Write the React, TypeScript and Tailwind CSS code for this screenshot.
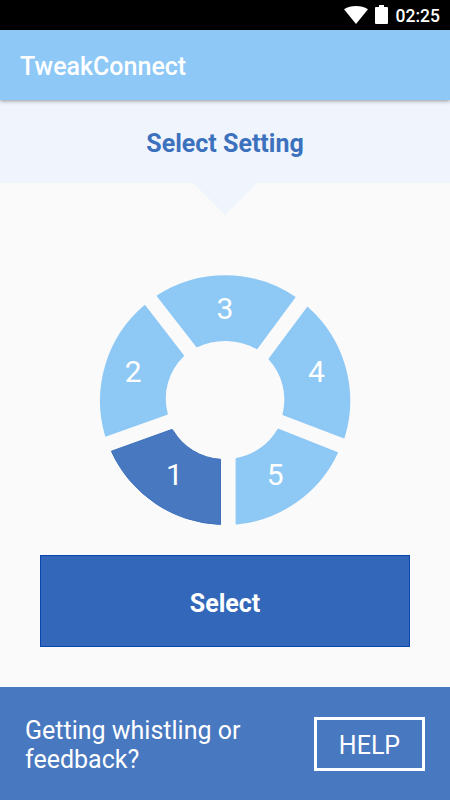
const segments = [
  {
    label: "1",
    x: 174.5,
    y: 485.2,
    selected: true,
    d: "M111.4 451.2 L171.5 429.6 Q172.3 429.3 172.9 430.2 A59.5 59.5 0 0 0 220.5 459.3 V524.5 A124.7 124.7 0 0 1 111.4 451.2 Z",
  },
  {
    label: "2",
    x: 133.3,
    y: 381.6,
    selected: false,
    d: "M144.8 306 L183.2 355.7 A59.5 59.5 0 0 0 166.9 414 L105.9 435.6 A124.3 124.3 0 0 1 144.8 306 Z",
  },
  {
    label: "3",
    x: 225,
    y: 319,
    selected: false,
    d: "M157.7 296 A124.3 124.3 0 0 1 294.5 297.3 L256.8 348.3 A66 66 0 0 0 197 346.4 Z",
  },
  {
    label: "4",
    x: 316.5,
    y: 381.6,
    selected: false,
    d: "M307.6 307.8 A124.3 124.3 0 0 1 343.8 437.4 L283.4 414.4 A60 60 0 0 0 269.4 359 Z",
  },
  {
    label: "5",
    x: 275.3,
    y: 485.2,
    selected: false,
    d: "M278.3 429.5 L337 452.8 A124.3 124.3 0 0 1 236.5 523.7 V458.8 A59.5 59.5 0 0 0 278.3 429.5 Z",
  },
];

function StatusBar() {
  return (
    <div className="flex h-[30px] items-center justify-end bg-black pr-[10px] text-white">
      <svg className="mr-px h-[18px] w-6" viewBox="0 0 24 18" fill="currentColor">
        <path d="M0 3.3 C7 -1.1 17 -1.1 24 3.3 L12 18 Z" />
      </svg>
      <svg className="mb-px ml-[6px] h-[19px] w-[13px]" viewBox="0 0 13 19" fill="currentColor">
        <path d="M4 0 H9 V2 H12 Q13 2 13 3 V18 Q13 19 12 19 H1 Q0 19 0 18 V3 Q0 2 1 2 H4 Z" />
      </svg>
      <span className="ml-2 pt-[3px] text-[17.5px] leading-none font-medium">02:25</span>
    </div>
  );
}

function SettingWheel() {
  return (
    <svg className="h-[252px] w-[252px]" viewBox="99 274 252 252">
      {segments.map((segment) => (
        <g key={segment.label}>
          <path
            d={segment.d}
            className={segment.selected ? "fill-[#4878c0] stroke-[#3d71bd]" : "fill-[#8ec8f5] stroke-[#8ec8f5]"}
            strokeWidth={segment.selected ? 1 : 1.8}
            strokeLinejoin="round"
          />
          <text x={segment.x} y={segment.y} textAnchor="middle" className="fill-white text-[30px]">
            {segment.label}
          </text>
        </g>
      ))}
    </svg>
  );
}

export default function App() {
  return (
    <div className="flex h-[800px] w-[450px] flex-col overflow-hidden bg-[#fafafa] font-['Roboto',sans-serif]">
      <StatusBar />

      <header className="z-10 flex h-[70px] items-center bg-[#8ec8f7] pt-[3px] pl-5 shadow-[0_1px_4px_rgba(0,0,0,0.4)]">
        <h1 className="text-[25px] font-medium text-white">TweakConnect</h1>
      </header>

      <section className="flex h-[83px] items-center justify-center bg-[#f0f5fd] pt-[5px]">
        <h2 className="text-[25px] font-bold text-[#3c71be]">Select Setting</h2>
      </section>
      {/* Pointer under the heading */}
      <svg className="h-8 w-16 self-center" viewBox="0 0 64 32">
        <path d="M0 0 H64 L32 32 Z" fill="#f0f5fd" />
      </svg>

      <main className="flex flex-1 flex-col items-center pt-[59px]">
        <SettingWheel />
        <button className="mt-[29px] h-[92px] w-[370px] border border-[#0746ae] bg-[#3267b9] pt-1.5 text-[25px] font-bold text-white">
          Select
        </button>
      </main>

      <footer className="flex h-[113px] items-center justify-between bg-[#4878bf] pr-[25px] pl-[25px] text-[25px] text-white">
        <p className="w-[230px] pt-0.5 leading-[29px]">Getting whistling or feedback?</p>
        <button className="h-[54px] w-[111px] border-3 border-white pt-1">HELP</button>
      </footer>
    </div>
  );
}
